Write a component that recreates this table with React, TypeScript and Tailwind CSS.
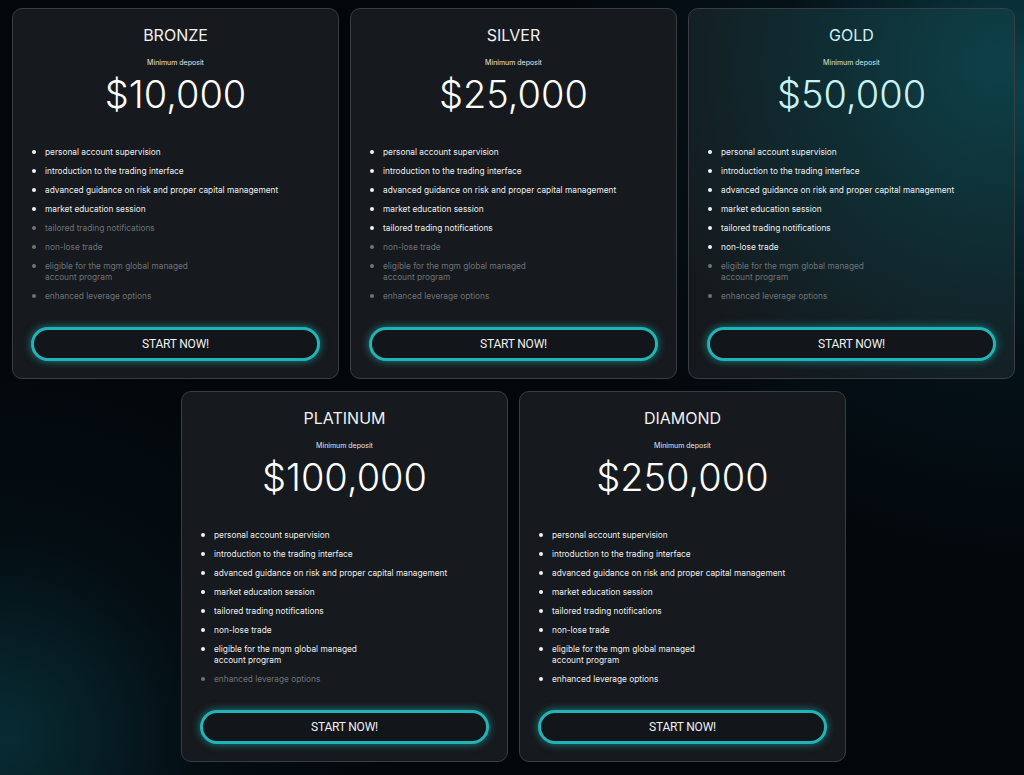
import React from "react";

type Plan = {
  name: string;
  price: string;
  active: number;
  gold?: boolean;
};

const features = [
  ["personal account supervision"],
  ["introduction to the trading interface"],
  ["advanced guidance on risk and proper capital management"],
  ["market education session"],
  ["tailored trading notifications"],
  ["non-lose trade"],
  ["eligible for the mgm global managed", "account program"],
  ["enhanced leverage options"],
];

const plans: Plan[] = [
  { name: "BRONZE", price: "$10,000", active: 4 },
  { name: "SILVER", price: "$25,000", active: 5 },
  { name: "GOLD", price: "$50,000", active: 6, gold: true },
  { name: "PLATINUM", price: "$100,000", active: 7 },
  { name: "DIAMOND", price: "$250,000", active: 8 },
];

function PlanCard({ plan }: { plan: Plan }) {
  return (
    <div
      className={
        "w-[327px] h-[371px] rounded-[10px] border border-[#3a3e44] px-[18px] pt-[16px] flex flex-col " +
        (plan.gold
          ? "bg-[radial-gradient(ellipse_at_95%_15%,#0e4048_0%,#0f2d33_40%,#15191d_85%)]"
          : "bg-[#16191d]")
      }
    >
      <h2
        className={
          "text-center text-[16px] leading-[20px] font-normal font-['Inter',sans-serif] " +
          (plan.gold ? "text-[#d6f1f1]" : "text-[#eef0f2]")
        }
      >
        {plan.name}
      </h2>
      <p
        className={
          "mt-[13px] text-center text-[7px] leading-[10px] font-['Inter',sans-serif] " +
          (plan.gold ? "text-[#cfe9ea]" : "text-[#e4e6e8]")
        }
      >
        Minimum deposit
      </p>
      <p
        className={
          "mt-[5px] text-center text-[38px] leading-[42px] font-light font-['Inter',sans-serif] " +
          (plan.gold ? "text-[#c9f3f3]" : "text-white")
        }
      >
        {plan.price}
      </p>
      <ul className="mt-[32px] flex flex-col gap-[8px] font-['Inter',sans-serif] text-[8.3px] leading-[11px]">
        {features.map((f, i) => {
          const on = i < plan.active;
          return (
            <li
              key={i}
              className={"flex " + (on ? "text-[#eceef0]" : "text-[#6f7378]")}
            >
              <span className="w-[14px] shrink-0 pl-[1px] pt-[3px]">
                <span
                  className={
                    "block w-[4px] h-[4px] rounded-full " +
                    (on ? "bg-[#f2f3f4]" : "bg-[#6f7378]")
                  }
                />
              </span>
              <span>
                {f.map((line) => (
                  <span key={line} className="block">
                    {line}
                  </span>
                ))}
              </span>
            </li>
          );
        })}
      </ul>
      <button className="mt-[25px] h-[34px] w-full rounded-full border-[3px] border-[#21b4b7] bg-[#121519] shadow-[0_0_8px_rgba(35,200,205,0.6)] text-[12px] text-[#eef0f2] font-['Roboto',sans-serif] tracking-[-0.2px]">
        START NOW!
      </button>
    </div>
  );
}

export default function App() {
  return (
    <div className="min-h-[775px] w-[1024px] bg-[#03070b] bg-[radial-gradient(circle_at_100%_12%,rgba(12,70,80,0.9)_0%,rgba(6,30,38,0.5)_20%,transparent_40%),radial-gradient(circle_at_0%_95%,rgba(10,60,70,0.7)_0%,rgba(5,25,32,0.35)_16%,transparent_32%)] pt-[8px] pl-[12px] pr-[9px] pb-[13px]">
      <div className="flex flex-wrap justify-center gap-x-[11px] gap-y-[12px]">
        {plans.map((p) => (
          <PlanCard key={p.name} plan={p} />
        ))}
      </div>
    </div>
  );
}
